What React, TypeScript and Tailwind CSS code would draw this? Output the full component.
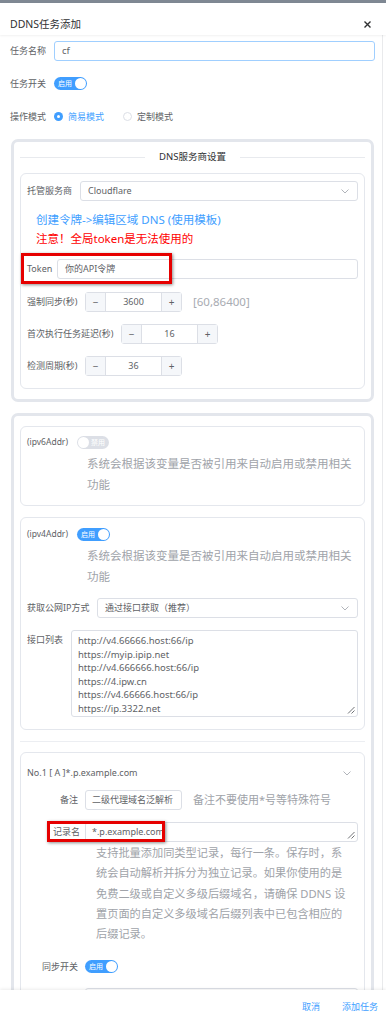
import React from "react";

const FONT = { fontFamily: '"Noto Sans", "Noto Sans CJK SC", sans-serif' };

function Chevron() {
  return (
    <svg width="8" height="5" viewBox="0 0 8 5" fill="none">
      <path d="M0.5 0.5 L4 4 L7.5 0.5" stroke="#a8abb2" strokeWidth="0.9" />
    </svg>
  );
}

function Resize() {
  return (
    <svg width="8" height="8" viewBox="0 0 8 8" className="absolute bottom-[2px] right-[2px]">
      <path d="M7.5 1 L1 7.5 M7.5 4.5 L4.5 7.5" stroke="#606266" strokeWidth="0.9" />
    </svg>
  );
}

function Toggle({ on }: { on: boolean }) {
  if (on) {
    return (
      <div className="flex h-[13px] w-[33px] items-center rounded-full bg-[#409eff] pl-[4px] pr-[1px]">
        <span className="text-[7px] leading-none text-white">启用</span>
        <span className="ml-auto h-[11px] w-[11px] rounded-full bg-white" />
      </div>
    );
  }
  return (
    <div className="flex h-[13px] w-[32px] items-center rounded-full bg-[#dcdfe6] pl-[1px] pr-[4px]">
      <span className="h-[11px] w-[11px] rounded-full bg-white" />
      <span className="ml-auto text-[7px] leading-none text-white">禁用</span>
    </div>
  );
}

function NumInput({ value }: { value: string }) {
  return (
    <div className="flex h-[20px] w-[97px] items-stretch rounded-[3px] border border-[#dcdfe6] bg-white">
      <div className="flex w-[20px] items-center justify-center border-r border-[#dcdfe6] bg-[#f5f7fa] text-[10px] leading-none text-[#606266]">
        −
      </div>
      <div className="flex flex-1 items-center justify-center text-[9px] text-[#606266]">{value}</div>
      <div className="flex w-[20px] items-center justify-center border-l border-[#dcdfe6] bg-[#f5f7fa] text-[10px] leading-none text-[#606266]">
        +
      </div>
    </div>
  );
}

function SelectBox({ text }: { text: string }) {
  return (
    <div className="flex h-[20px] flex-1 items-center justify-between rounded-[3px] border border-[#dcdfe6] bg-white pl-[7px] pr-[8px]">
      <span className="text-[9px] text-[#606266]">{text}</span>
      <Chevron />
    </div>
  );
}

export default function App() {
  return (
    <div className="relative h-[1024px] w-[386px] overflow-hidden bg-white" style={FONT}>
      {/* top overlay strip */}
      <div className="h-[3px] bg-[#7f8893]" />
      {/* header */}
      <div className="relative z-10 flex h-[32px] items-start justify-between bg-white pl-[10px] pr-[15px] pt-[15px] shadow-[0_1px_2px_rgba(0,0,0,0.06)]">
        <span className="text-[10.5px] leading-[12px] text-[#303133]">DDNS任务添加</span>
        <svg width="7" height="7" viewBox="0 0 7 7" className="mt-[3px]">
          <path d="M0.5 0.5 L6.5 6.5 M6.5 0.5 L0.5 6.5" stroke="#303133" strokeWidth="1.4" />
        </svg>
      </div>

      {/* body */}
      <div className="relative h-[955px] overflow-hidden pl-[10px] pr-[11px]">
        <div className="absolute bottom-0 right-[3px] top-0 w-px bg-[#e9eaec]" />

        {/* 任务名称 */}
        <div className="mt-[6px] flex h-[20px] items-center">
          <span className="w-[44px] text-[9px] text-[#606266]">任务名称</span>
          <div className="flex h-[20px] flex-1 items-center rounded-[3px] border border-[#a0cfff] pl-[7px] text-[9.5px] text-[#606266]">
            cf
          </div>
        </div>

        {/* 任务开关 */}
        <div className="mt-[16px] flex h-[13px] items-center">
          <span className="w-[44px] text-[9px] text-[#606266]">任务开关</span>
          <Toggle on />
        </div>

        {/* 操作模式 */}
        <div className="mt-[20px] flex h-[13px] items-center">
          <span className="w-[44px] text-[9px] text-[#606266]">操作模式</span>
          <span className="flex h-[9px] w-[9px] items-center justify-center rounded-full bg-[#409eff]">
            <span className="h-[3px] w-[3px] rounded-full bg-white" />
          </span>
          <span className="ml-[5px] text-[9px] text-[#409eff]">简易模式</span>
          <span className="ml-[19px] h-[9px] w-[9px] rounded-full border border-[#dcdfe6]" />
          <span className="ml-[5px] text-[9px] text-[#606266]">定制模式</span>
        </div>

        {/* Card 1 */}
        <div className="mx-[1px] mt-[16px] rounded-[7px] border-[3px] border-[#e3e6ec] px-[6px] pb-[10px] pt-[9px]">
          <div className="flex h-[12px] items-center">
            <div className="h-px flex-1 bg-[#e8eaee]" />
            <span className="px-[14px] text-[9.5px] leading-[12px] text-[#303133]">DNS服务商设置</span>
            <div className="h-px flex-1 bg-[#e8eaee]" />
          </div>
          <div className="mt-[10px] rounded-[6px] border border-[#e4e7ed] px-[6px] pb-[12px] pt-[7px]">
            <div className="flex h-[20px] items-center">
              <span className="w-[53px] text-[9px] text-[#606266]">托管服务商</span>
              <SelectBox text="Cloudflare" />
            </div>
            <div className="mt-[9px] pl-[9px] text-[11.5px] leading-[19px]">
              <div className="text-[#409eff]">创建令牌-&gt;编辑区域 DNS (使用模板)</div>
              <div className="text-[#ff0000]">注意！全局token是无法使用的</div>
            </div>
            <div className="relative mt-[11px] flex h-[20px] items-center">
              <span className="w-[30px] text-[9px] text-[#606266]">Token</span>
              <div className="flex h-[20px] flex-1 items-center rounded-[3px] border border-[#dcdfe6] pl-[7px] text-[9px] text-[#606266]">
                你的API令牌
              </div>
              <div className="absolute left-[-6px] top-[-6px] h-[31px] w-[151px] border-[3px] border-[#e60000] shadow-[1px_1px_3px_rgba(0,0,0,0.45)]" />
            </div>
            <div className="mt-[13px] flex h-[20px] items-center">
              <span className="w-[58px] text-[9px] text-[#606266]">强制同步(秒)</span>
              <NumInput value="3600" />
              <span className="ml-[11px] text-[11.5px] text-[#a8abb2]">[60,86400]</span>
            </div>
            <div className="mt-[12px] flex h-[20px] items-center">
              <span className="w-[94px] text-[9px] text-[#606266]">首次执行任务延迟(秒)</span>
              <NumInput value="16" />
            </div>
            <div className="mt-[12px] flex h-[20px] items-center">
              <span className="w-[58px] text-[9px] text-[#606266]">检测周期(秒)</span>
              <NumInput value="36" />
            </div>
          </div>
        </div>

        {/* Card 2 */}
        <div className="mx-[1px] mt-[11px] rounded-[7px] border-[3px] border-[#e3e6ec] px-[6px] pt-[10px] pb-[20px]">
          {/* ipv6 */}
          <div className="rounded-[6px] border border-[#e4e7ed] px-[6px] pb-[10px] pt-[9px]">
            <div className="flex h-[13px] items-center">
              <span className="w-[50px] text-[8.5px] text-[#606266]">(ipv6Addr)</span>
              <Toggle on={false} />
            </div>
            <div className="mt-[4px] pl-[60px] text-[11.5px] leading-[21px] text-[#a0a3a9]">
              <div className="whitespace-nowrap">系统会根据该变量是否被引用来自动启用或禁用相关</div>
              <div>功能</div>
            </div>
          </div>

          {/* ipv4 */}
          <div className="mt-[11px] rounded-[6px] border border-[#e4e7ed] px-[6px] pb-[12px] pt-[10px]">
            <div className="flex h-[13px] items-center">
              <span className="w-[50px] text-[8.5px] text-[#606266]">(ipv4Addr)</span>
              <Toggle on />
            </div>
            <div className="mt-[4px] pl-[60px] text-[11.5px] leading-[21px] text-[#a0a3a9]">
              <div className="whitespace-nowrap">系统会根据该变量是否被引用来自动启用或禁用相关</div>
              <div>功能</div>
            </div>
            <div className="mt-[11px] flex h-[20px] items-center">
              <span className="w-[70px] text-[9px] text-[#606266]">获取公网IP方式</span>
              <SelectBox text="通过接口获取（推荐）" />
            </div>
            <div className="mt-[12px] flex">
              <span className="w-[44px] pt-[3px] text-[9px] leading-[14px] text-[#606266]">接口列表</span>
              <div className="relative h-[87px] flex-1 rounded-[3px] border border-[#dcdfe6] pl-[6px] pt-[3px] text-[9.5px] leading-[13.6px] text-[#606266]">
                <div>http://v4.66666.host:66/ip</div>
                <div>https://myip.ipip.net</div>
                <div>http://v4.666666.host:66/ip</div>
                <div>https://4.ipw.cn</div>
                <div>https://v4.66666.host:66/ip</div>
                <div>https://ip.3322.net</div>
                <Resize />
              </div>
            </div>
          </div>

          <div className="mt-[11px] h-px bg-[#eceef2]" />

          {/* record card */}
          <div className="mt-[10px] rounded-[6px] border border-[#e4e7ed] px-[6px] pb-[12px] pt-[10px]">
            <div className="flex h-[20px] items-center justify-between pr-[7px]">
              <span className="text-[9px] text-[#606266]">No.1 [ A ]*.p.example.com</span>
              <Chevron />
            </div>
            <div className="mt-[7px] flex h-[20px] items-center">
              <span className="w-[58px] pr-[7px] text-right text-[9px] text-[#606266]">备注</span>
              <div className="flex h-[20px] w-[97px] items-center rounded-[3px] border border-[#dcdfe6] pl-[6px] text-[9px] text-[#606266]">
                二级代理域名泛解析
              </div>
              <span className="ml-[11px] whitespace-nowrap text-[11px] text-[#a0a3a9]">备注不要使用*号等特殊符号</span>
            </div>
            <div className="relative mt-[12px] flex h-[20px] items-center">
              <span className="w-[58px] pr-[5px] text-right text-[9px] text-[#606266]">记录名</span>
              <div className="relative flex h-[20px] flex-1 items-center rounded-[3px] border border-[#dcdfe6] pl-[6px] text-[9px] text-[#606266]">
                *.p.example.com
                <Resize />
              </div>
              <div className="absolute left-[20px] top-[-1px] h-[21px] w-[118px] border-[3px] border-[#e60000] shadow-[1px_1px_3px_rgba(0,0,0,0.45)]" />
            </div>
            <div className="mt-[1px] pl-[69px] text-[11.2px] leading-[20.3px] text-[#a0a3a9]">
              <div className="whitespace-nowrap">支持批量添加同类型记录，每行一条。保存时，系</div>
              <div className="whitespace-nowrap">统会自动解析并拆分为独立记录。如果你使用的是</div>
              <div className="whitespace-nowrap">免费二级或自定义多级后缀域名，请确保 DDNS 设</div>
              <div className="whitespace-nowrap">置页面的自定义多级域名后缀列表中已包含相应的</div>
              <div className="whitespace-nowrap">后缀记录。</div>
            </div>
            <div className="mt-[16px] flex h-[13px] items-center">
              <span className="w-[58px] pr-[7px] text-right text-[9px] text-[#606266]">同步开关</span>
              <Toggle on />
            </div>
            <div className="mt-[15px] flex h-[20px] items-center">
              <span className="w-[58px]" />
              <div className="h-[20px] flex-1 rounded-[3px] border border-[#dcdfe6]" />
            </div>
          </div>
        </div>
      </div>

      {/* footer */}
      <div className="relative z-10 flex h-[34px] items-center justify-end bg-white pr-[8px] shadow-[0_-1px_3px_rgba(0,0,0,0.08)]">
        <span className="text-[9px] text-[#409eff]">取消</span>
        <span className="ml-[22px] text-[9px] text-[#409eff]">添加任务</span>
      </div>
    </div>
  );
}
